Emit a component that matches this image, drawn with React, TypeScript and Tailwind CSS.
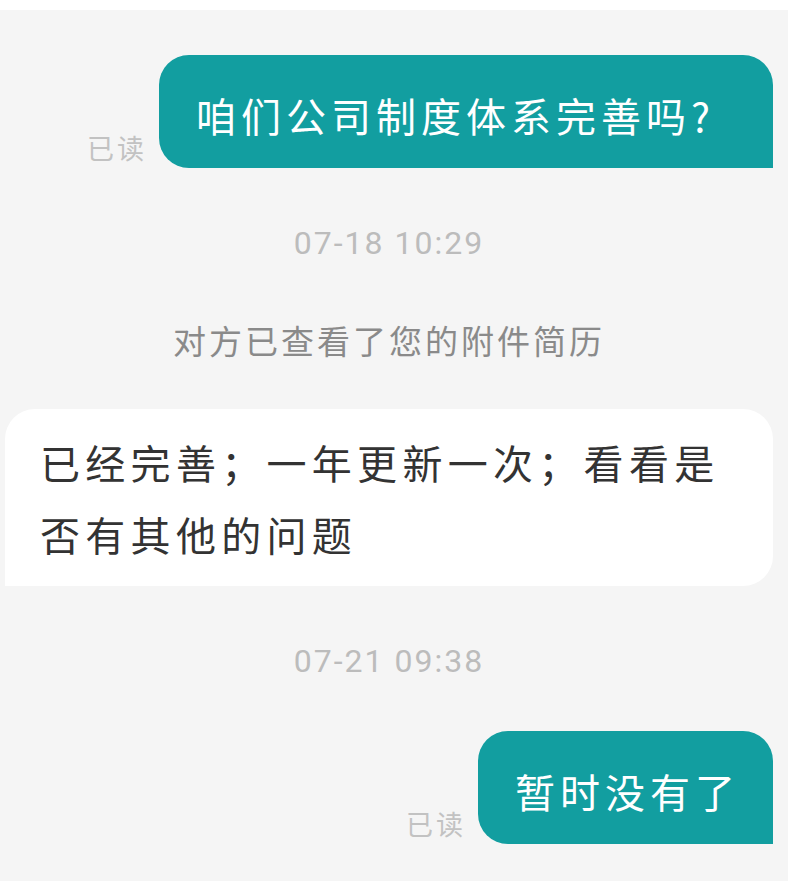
const CJK = "font-['Noto_Sans_CJK_SC','Noto_Sans',sans-serif]";

function Sent({
  text,
  padRight,
}: {
  readonly text: string;
  readonly padRight: string;
}): React.ReactElement {
  return (
    <div className="flex items-end justify-end gap-[12px] pr-[15px]">
      <span className={`${CJK} mb-[5px] text-[27px] leading-[30px] tracking-[3px] text-[#c2c2c2]`}>
        已读
      </span>
      <div
        className={`${CJK} ${padRight} flex h-[113px] items-center rounded-[30px] rounded-br-none bg-[#129ea0] pl-[37px] pt-[6px] text-[40px] leading-[50px] tracking-[5px] text-white`}
      >
        {text}
      </div>
    </div>
  );
}

function Stamp({ time }: { readonly time: string }): React.ReactElement {
  return (
    <p className="h-[40px] pr-[10px] text-center font-['Roboto',sans-serif] text-[32px] leading-[40px] tracking-[2px] text-[#bcbcbc]">
      {time}
    </p>
  );
}

export default function App(): React.ReactElement {
  return (
    <div className="h-[881px] w-[788px] overflow-hidden bg-[#f5f5f5]">
      <div className="h-[10px] bg-white" />

      <div className="mt-[45px]">
        <Sent text="咱们公司制度体系完善吗?" padRight="pr-[58px]" />
      </div>

      <div className="mt-[55px]">
        <Stamp time="07-18 10:29" />
      </div>

      <p
        className={`${CJK} mt-[57px] h-[40px] pr-[10px] text-center text-[33px] leading-[40px] tracking-[3px] text-[#8a8a8a]`}
      >
        对方已查看了您的附件简历
      </p>

      <div
        className={`${CJK} ml-[5px] mr-[15px] mt-[49px] h-[177px] rounded-[30px] rounded-bl-none bg-white pl-[35px] pr-[40px] pt-[17px] text-[40px] leading-[72px] tracking-[5.3px] text-[#333333]`}
      >
        已经完善；一年更新一次；看看是否有其他的问题
      </div>

      <div className="mt-[55px]">
        <Stamp time="07-21 09:38" />
      </div>

      <div className="mt-[50px]">
        <Sent text="暂时没有了" padRight="pr-[33px]" />
      </div>
    </div>
  );
}
